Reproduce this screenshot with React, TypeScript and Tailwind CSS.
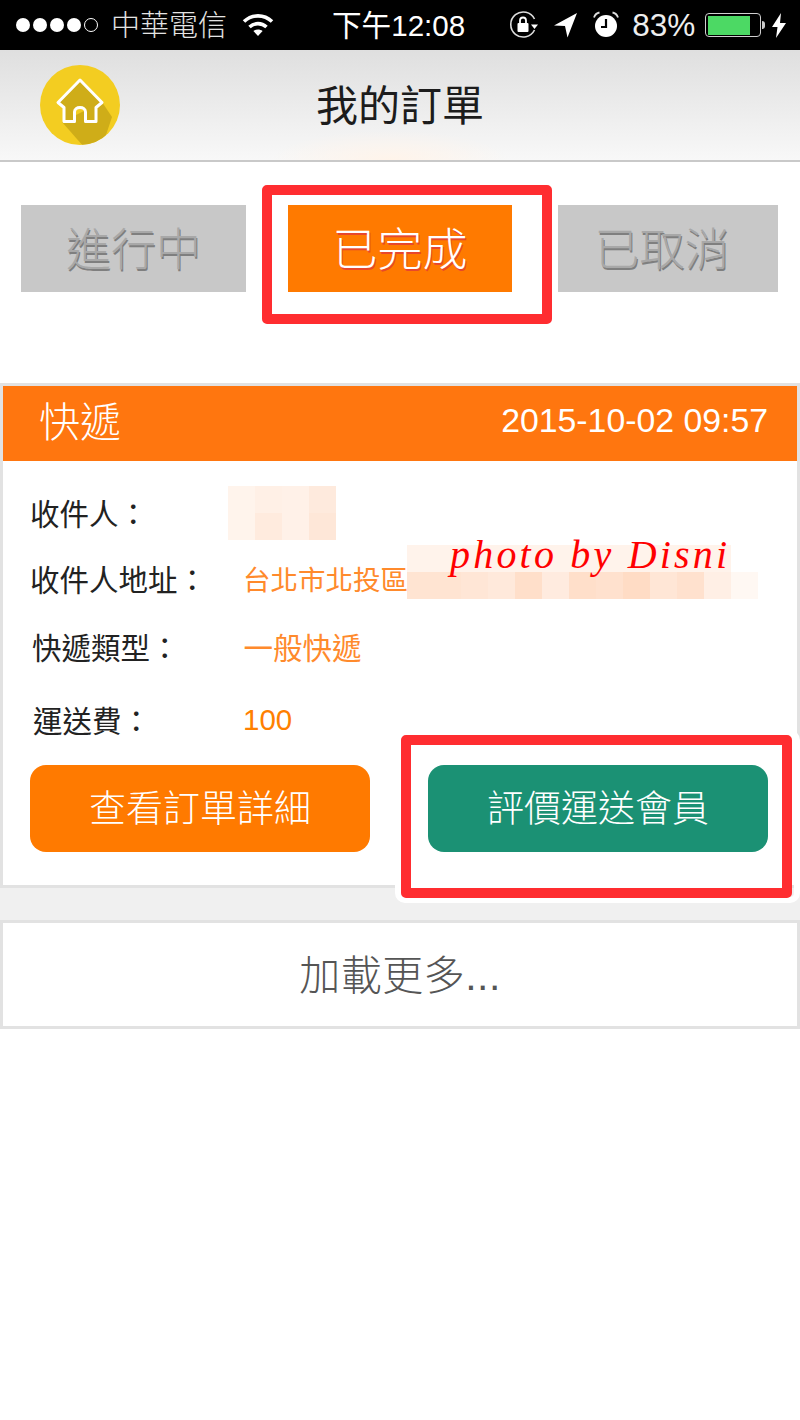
import type { ReactNode } from 'react'

const cjk = "font-['Liberation_Sans','Noto_Sans_CJK_TC',sans-serif]"

function WifiIcon() {
  return (
    <svg width="32" height="26" viewBox="0 0 32 26" fill="none" stroke="#fff" strokeWidth="3.6">
      <path d="M2 9.5C10 2 22 2 30 9.5" />
      <path d="M7.5 15C12.5 10.5 19.5 10.5 24.5 15" />
      <path d="M16 24l-4.6-5c2.7-2 6.5-2 9.2 0z" fill="#fff" stroke="none" />
    </svg>
  )
}

function RotationLockIcon() {
  return (
    <svg width="30" height="30" viewBox="0 0 30 30" fill="none">
      <path d="M25.5 20A12.5 12.5 0 1 1 25.5 9" stroke="#ddd" strokeWidth="1.6" />
      <path d="M22 14.5h7l-3.5 4.5z" fill="#fff" />
      <rect x="8.5" y="13" width="11" height="9" rx="1" fill="#fff" />
      <path d="M11 13v-2.5a3 3 0 0 1 6 0V13" stroke="#fff" strokeWidth="1.8" />
    </svg>
  )
}

function LocationIcon() {
  return (
    <svg width="24" height="26" viewBox="0 0 24 26" fill="#fff">
      <path d="M23 1L0 13.5l11 .5 2.5 11.5z" />
    </svg>
  )
}

function AlarmIcon() {
  return (
    <svg width="26" height="28" viewBox="0 0 26 28" fill="none">
      <circle cx="13" cy="15" r="11" fill="#fff" />
      <path d="M13 8v8H8" stroke="#000" strokeWidth="2.2" />
      <path d="M1 6.5C2 3.5 4 2 6.5 1.5M25 6.5C24 3.5 22 2 19.5 1.5" stroke="#ddd" strokeWidth="1.8" />
    </svg>
  )
}

function BoltIcon() {
  return (
    <svg width="14" height="25" viewBox="0 0 14 25" fill="#fff">
      <path d="M9 0L0 14h5.5L4 25l10-15H8z" />
    </svg>
  )
}

function Battery() {
  return (
    <div className="flex items-center">
      <div className="h-[24px] w-[56px] rounded-[4px] border border-[#cfcfcf] p-[1.5px] pr-[10px]">
        <div className="h-full w-full bg-[#4cd964]" />
      </div>
      <div className="ml-[1px] h-[8px] w-[3px] rounded-r-full bg-[#ccc]" />
    </div>
  )
}

function StatusBar() {
  return (
    <div className="relative flex h-[50px] items-center bg-black text-white">
      <div className="ml-[16px] flex items-center gap-[3px]">
        {[0, 1, 2, 3].map((i) => (
          <span key={i} className="h-[14px] w-[14px] rounded-full bg-white" />
        ))}
        <span className="h-[14px] w-[14px] rounded-full border border-white" />
      </div>
      <span className="ml-[13px] pt-[2px] text-[29px] leading-none font-light text-[#e4e4e4]">中華電信</span>
      <div className="ml-[15px]">
        <WifiIcon />
      </div>
      <span className="ml-[58px] pt-[2px] text-[29.600px] leading-none">下午12:08</span>
      <div className="ml-[44px]">
        <RotationLockIcon />
      </div>
      <div className="ml-[15px]">
        <LocationIcon />
      </div>
      <div className="ml-[15px]">
        <AlarmIcon />
      </div>
      <span className="ml-[13px] pt-[2px] text-[31.500px] leading-none text-[#eee]">83%</span>
      <div className="ml-[10px]">
        <Battery />
      </div>
      <div className="ml-[7px]">
        <BoltIcon />
      </div>
    </div>
  )
}

function HomeButton() {
  return (
    <svg width="80" height="80" viewBox="0 0 80 80">
      <defs>
        <clipPath id="home-circle">
          <circle cx="40" cy="40" r="40" />
        </clipPath>
      </defs>
      <circle cx="40" cy="40" r="40" fill="#f3cd21" />
      {/* long shadow */}
      <path d="M62 37L72 52 64 76 44 82 22 57z" fill="#cfad18" clipPath="url(#home-circle)" />
      <path
        d="M40 15L18 37.500 24 42.500V56.500H34.500V47c0-3 2.500-4.500 5.500-4.500s5.500 1.500 5.500 4.500V56.500H56V42.500L62 37.500z"
        fill="#cfad18"
        stroke="#fff"
        strokeWidth="3"
        strokeLinejoin="round"
      />
    </svg>
  )
}

function Header() {
  return (
    <div className="relative flex h-[112px] items-start border-b-2 border-[#c9c9c9] bg-gradient-to-b from-[#dfdfdf] to-[#f8f8f8] pl-[40px] pt-[15px]">
      <div className="absolute bottom-0 left-[270px] h-[30px] w-[240px] bg-[radial-gradient(ellipse_at_bottom,#fff4ea,transparent_70%)]" />
      <div className="relative">
        <HomeButton />
      </div>
      <h1 className="absolute left-0 right-0 top-[33px] text-center text-[42px] leading-[48px] font-normal text-[#1c1c1c]">
        我的訂單
      </h1>
    </div>
  )
}

function Tab({ label, active, className }: { label: string; active?: boolean; className: string }) {
  return (
    <div
      className={
        active
          ? `flex h-[87px] items-center justify-center bg-[#ff7a00] pt-[4px] text-[45px] font-light text-white [text-shadow:1px_2px_0_#e8472c] ${className}`
          : `flex h-[87px] items-center justify-center bg-[#c8c8c8] pt-[4px] text-[45px] font-light text-[#a8a8a8] [text-shadow:1px_2px_0_#7f7f7f] ${className}`
      }
    >
      {label}
    </div>
  )
}

function Pixels({ rows }: { rows: string[][] }) {
  return (
    <div className="flex flex-col">
      {rows.map((row, i) => (
        <div key={i} className="flex">
          {row.map((color, j) => (
            <div key={j} className="h-[27px] w-[27px]" style={{ backgroundColor: color }} />
          ))}
        </div>
      ))}
    </div>
  )
}

function OrderRow({ label, children, className }: { label: string; children: ReactNode; className: string }) {
  return (
    <div className={`flex h-[60px] items-center ${className}`}>
      <div className="pt-[4px] text-[29.500px] leading-none text-[#222]">{label}</div>
      {children}
    </div>
  )
}

const nameBlock = [
  ['#fff4ec', '#fff0e6', '#fff1e8', '#feeadd'],
  ['#fff4ec', '#ffebde', '#fff1e8', '#fee7d8'],
]

const addressBlock = [
  ['#fff3eb', '#fff3eb', '#fff3eb', '#fff3eb', '#fff3eb', '#fff3eb', '#fff3eb', '#fff3eb', '#fff3eb', '#fff3eb', '#fff3eb', '#fff3eb'],
  ['#ffe4d2', '#ffe4d2', '#ffe6d6', '#ffe9db', '#ffdfca', '#ffebdf', '#ffdfca', '#ffe1ce', '#ffdcc5', '#ffe6d6', '#ffe1ce', '#ffefe5', '#fff8f3'],
]

export default function App() {
  return (
    <div className={`relative h-[1420px] w-[800px] overflow-hidden bg-white ${cjk}`}>
      <StatusBar />
      <Header />

      {/* Status tabs */}
      <div className="flex pt-[43px]">
        <Tab label="進行中" className="ml-[21px] w-[225px]" />
        <Tab label="已完成" active className="ml-[42px] w-[224px]" />
        <Tab label="已取消" className="ml-[46px] w-[220px] pr-[12px]" />
      </div>

      {/* Order card */}
      <div className="mt-[91px] h-[505px] border-[3px] border-[#e2e2e2]">
        <div className="flex h-[75px] items-center justify-between bg-[#ff760f] pl-[36px] pr-[29px] text-white">
          <span className="text-[41px] leading-none font-light">快遞</span>
          <span className="pb-[5px] text-[33.800px] leading-none">2015-10-02 09:57</span>
        </div>
        <div className="mt-[3px] pl-[27px] pt-[19px]">
          <OrderRow label="收件人：" className="">
            <div className="ml-[80px]">
              <Pixels rows={nameBlock} />
            </div>
          </OrderRow>
          <OrderRow label="收件人地址：" className="relative mt-[6px]">
            <span className="ml-[36px] pt-[4px] text-[27.500px] leading-none text-[#ff8a2c]">台北市北投區</span>
            <div className="absolute left-[377px] top-[-4px]">
              <Pixels rows={addressBlock} />
            </div>
          </OrderRow>
          <OrderRow label="快遞類型：" className="mt-[8px] pl-[2px]">
            <span className="ml-[64px] pt-[4px] text-[29.500px] leading-none text-[#ff8a2c]">一般快遞</span>
          </OrderRow>
          <OrderRow label="運送費：" className="mt-[13px] pl-[3px]">
            <span className="ml-[92px] text-[29.500px] leading-none text-[#ff8000]">100</span>
          </OrderRow>
          <div className="mt-[15px] flex">
            <button className="h-[87px] w-[340px] rounded-[16px] bg-[#ff7a00] pt-[3px] text-[37px] font-light text-white">
              查看訂單詳細
            </button>
            <button className="ml-[58px] h-[87px] w-[340px] rounded-[16px] bg-[#1b9174] pt-[3px] text-[37px] font-light text-white">
              評價運送會員
            </button>
          </div>
        </div>
      </div>

      {/* Load more */}
      <div className="h-[32px] bg-[#f0f0f0]" />
      <div className="flex h-[109px] items-center justify-center border-[3px] border-[#e2e2e2] pt-[5px] text-[41px] font-light tracking-[0.500px] text-[#555]">
        加載更多...
      </div>

      {/* Annotations drawn on top of the screenshot */}
      <div className="absolute left-[450px] top-[531px] font-['Liberation_Serif',serif] text-[40px] leading-[48px] tracking-[3.200px] italic text-[#f00]">
        photo by Disni
      </div>
      <div className="absolute left-[262px] top-[185px] h-[139px] w-[290px] rounded-[5px] border-[10px] border-[#ff2d30]" />
      <div className="absolute left-[395px] top-[730px] h-[173px] w-[405px] rounded-[10px] border-[6px] border-white" />
      <div className="absolute left-[401px] top-[735px] h-[163px] w-[391px] rounded-[5px] border-[10px] border-[#ff2d30]">
        <div className="absolute bottom-0 left-0 right-0 h-[20px] bg-white" />
      </div>
    </div>
  )
}
